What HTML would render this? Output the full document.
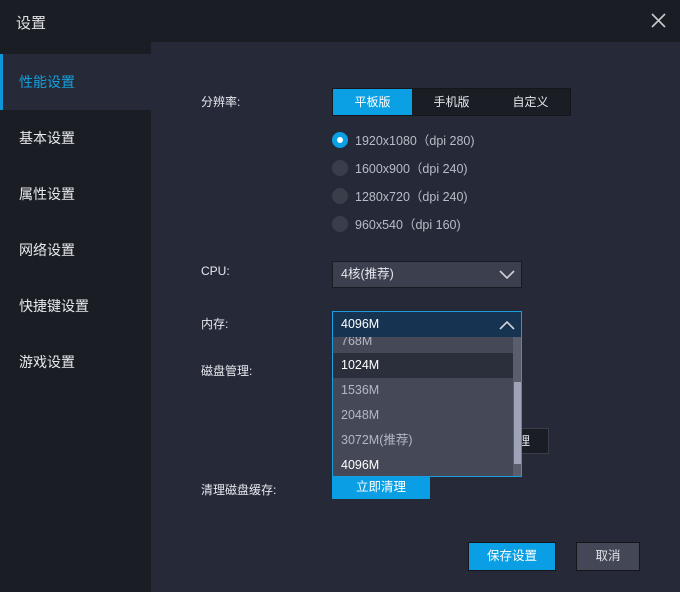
<!DOCTYPE html><html><head><meta charset="utf-8"><style>
*{margin:0;padding:0;box-sizing:border-box}
body{width:680px;height:592px;background:#1b1d25;font-family:"Liberation Sans","Noto Sans CJK SC",sans-serif;font-size:13px;color:#e6e8ee;position:relative;overflow:hidden}
.a{position:absolute}
.side{left:0;top:54px;width:151px}
.side div{height:56px;line-height:56px;padding-left:19px;font-size:14px;color:#e8eaf0}
.side .on{background:#262a38;color:#139fdd;border-left:3px solid #0d96d8;padding-left:16px}
.panel{left:151px;top:42px;width:529px;height:550px;background:#262a38}
.lbl{font-size:12px;color:#e6e8ee}
.seg{left:332px;top:88px;width:239px;height:28px;background:#1b1d25;border:1px solid #14161c;display:flex}
.seg div{flex:1;text-align:center;line-height:26px;font-size:12px}
.seg .s{background:#0b9fe3;color:#fff}
.r{left:332px;font-size:12.5px;color:#b8bcc6;display:flex;align-items:center}
.r i{width:16px;height:16px;border-radius:50%;background:#3a3e4b;margin-right:7px;display:inline-block;position:relative}
.r i.on{background:#0b9fe3}
.r i.on:after{content:"";position:absolute;left:5px;top:5px;width:6px;height:6px;border-radius:50%;background:#fff}
.sel{left:332px;width:190px;height:27px;padding-left:8px;line-height:25px;font-size:12.5px}
.btn{text-align:center;font-size:12.5px}
</style></head><body>
<div class="a" style="left:16px;top:12px;font-size:15px;color:#dfe1e6">设置</div>
<svg class="a" style="left:651px;top:13px" width="15" height="15"><path d="M1 1L14 14M14 1L1 14" stroke="#c8cad0" stroke-width="1.6"/></svg>
<div class="a panel"></div>
<div class="a side"><div class="on">性能设置</div><div>基本设置</div><div>属性设置</div><div>网络设置</div><div>快捷键设置</div><div>游戏设置</div></div>
<div class="a lbl" style="left:201px;top:93px">分辨率:</div>
<div class="a seg"><div class="s">平板版</div><div>手机版</div><div>自定义</div></div>
<div class="a r" style="top:130px"><i class="on"></i>1920x1080（dpi 280)</div>
<div class="a r" style="top:158px"><i></i>1600x900（dpi 240)</div>
<div class="a r" style="top:186px"><i></i>1280x720（dpi 240)</div>
<div class="a r" style="top:214px"><i></i>960x540（dpi 160)</div>
<div class="a lbl" style="left:201px;top:264px">CPU:</div>
<div class="a sel" style="top:261px;background:#3b3f4e;border:1px solid #191b22">4核(推荐)<svg class="a" style="right:6px;top:8px" width="16" height="10"><path d="M1 1L8 8L15 1" stroke="#d0d2d8" stroke-width="1.6" fill="none"/></svg></div>
<div class="a lbl" style="left:201px;top:315px">内存:</div>
<div class="a lbl" style="left:201px;top:362px">磁盘管理:</div>
<div class="a" style="left:460px;top:428px;width:89px;height:26px;background:#1b1d25;border:1px solid #3a3e4b;line-height:24px;text-align:right;padding-right:18px;font-size:12px">理</div>
<div class="a sel" style="top:311px;background:#163352;border:1px solid #1a9ee0;color:#fff">4096M<svg class="a" style="right:6px;top:8px" width="16" height="10"><path d="M1 9L8 2L15 9" stroke="#d0d2d8" stroke-width="1.6" fill="none"/></svg></div>
<div class="a" style="left:332px;top:337px;width:190px;height:140px;background:#444857;border:1px solid #1a9ee0;border-top:none;overflow:hidden;font-size:12.5px;color:#b4b8c2">
<div style="position:absolute;top:-8px;left:0;width:180px;height:24px;line-height:24px;padding-left:8px">768M</div>
<div style="position:absolute;top:16px;left:0;width:180px;height:25px;line-height:25px;padding-left:8px;background:#2b2e3b;color:#fff">1024M</div>
<div style="position:absolute;top:41px;left:8px;line-height:25px">1536M</div>
<div style="position:absolute;top:66px;left:8px;line-height:25px">2048M</div>
<div style="position:absolute;top:91px;left:8px;line-height:25px">3072M(推荐)</div>
<div style="position:absolute;top:116px;left:8px;line-height:25px;color:#fff">4096M</div>
<div style="position:absolute;left:180px;top:0;width:9px;height:140px;background:#5a5e6c"></div>
<div style="position:absolute;left:181px;top:45px;width:7px;height:82px;background:#9ea3b8"></div>
</div>
<div class="a btn" style="left:332px;top:477px;width:98px;height:22px;line-height:20px;background:#0a9fe4;color:#fff">立即清理</div>
<div class="a lbl" style="left:201px;top:481px">清理磁盘缓存:</div>
<div class="a btn" style="left:468px;top:542px;width:88px;height:29px;line-height:27px;background:#0a9fe4;border:1px solid #14161c;color:#fff">保存设置</div>
<div class="a btn" style="left:576px;top:542px;width:64px;height:29px;line-height:27px;background:#434756;border:1px solid #14161c;color:#e0e2e8">取消</div>
</body></html>
